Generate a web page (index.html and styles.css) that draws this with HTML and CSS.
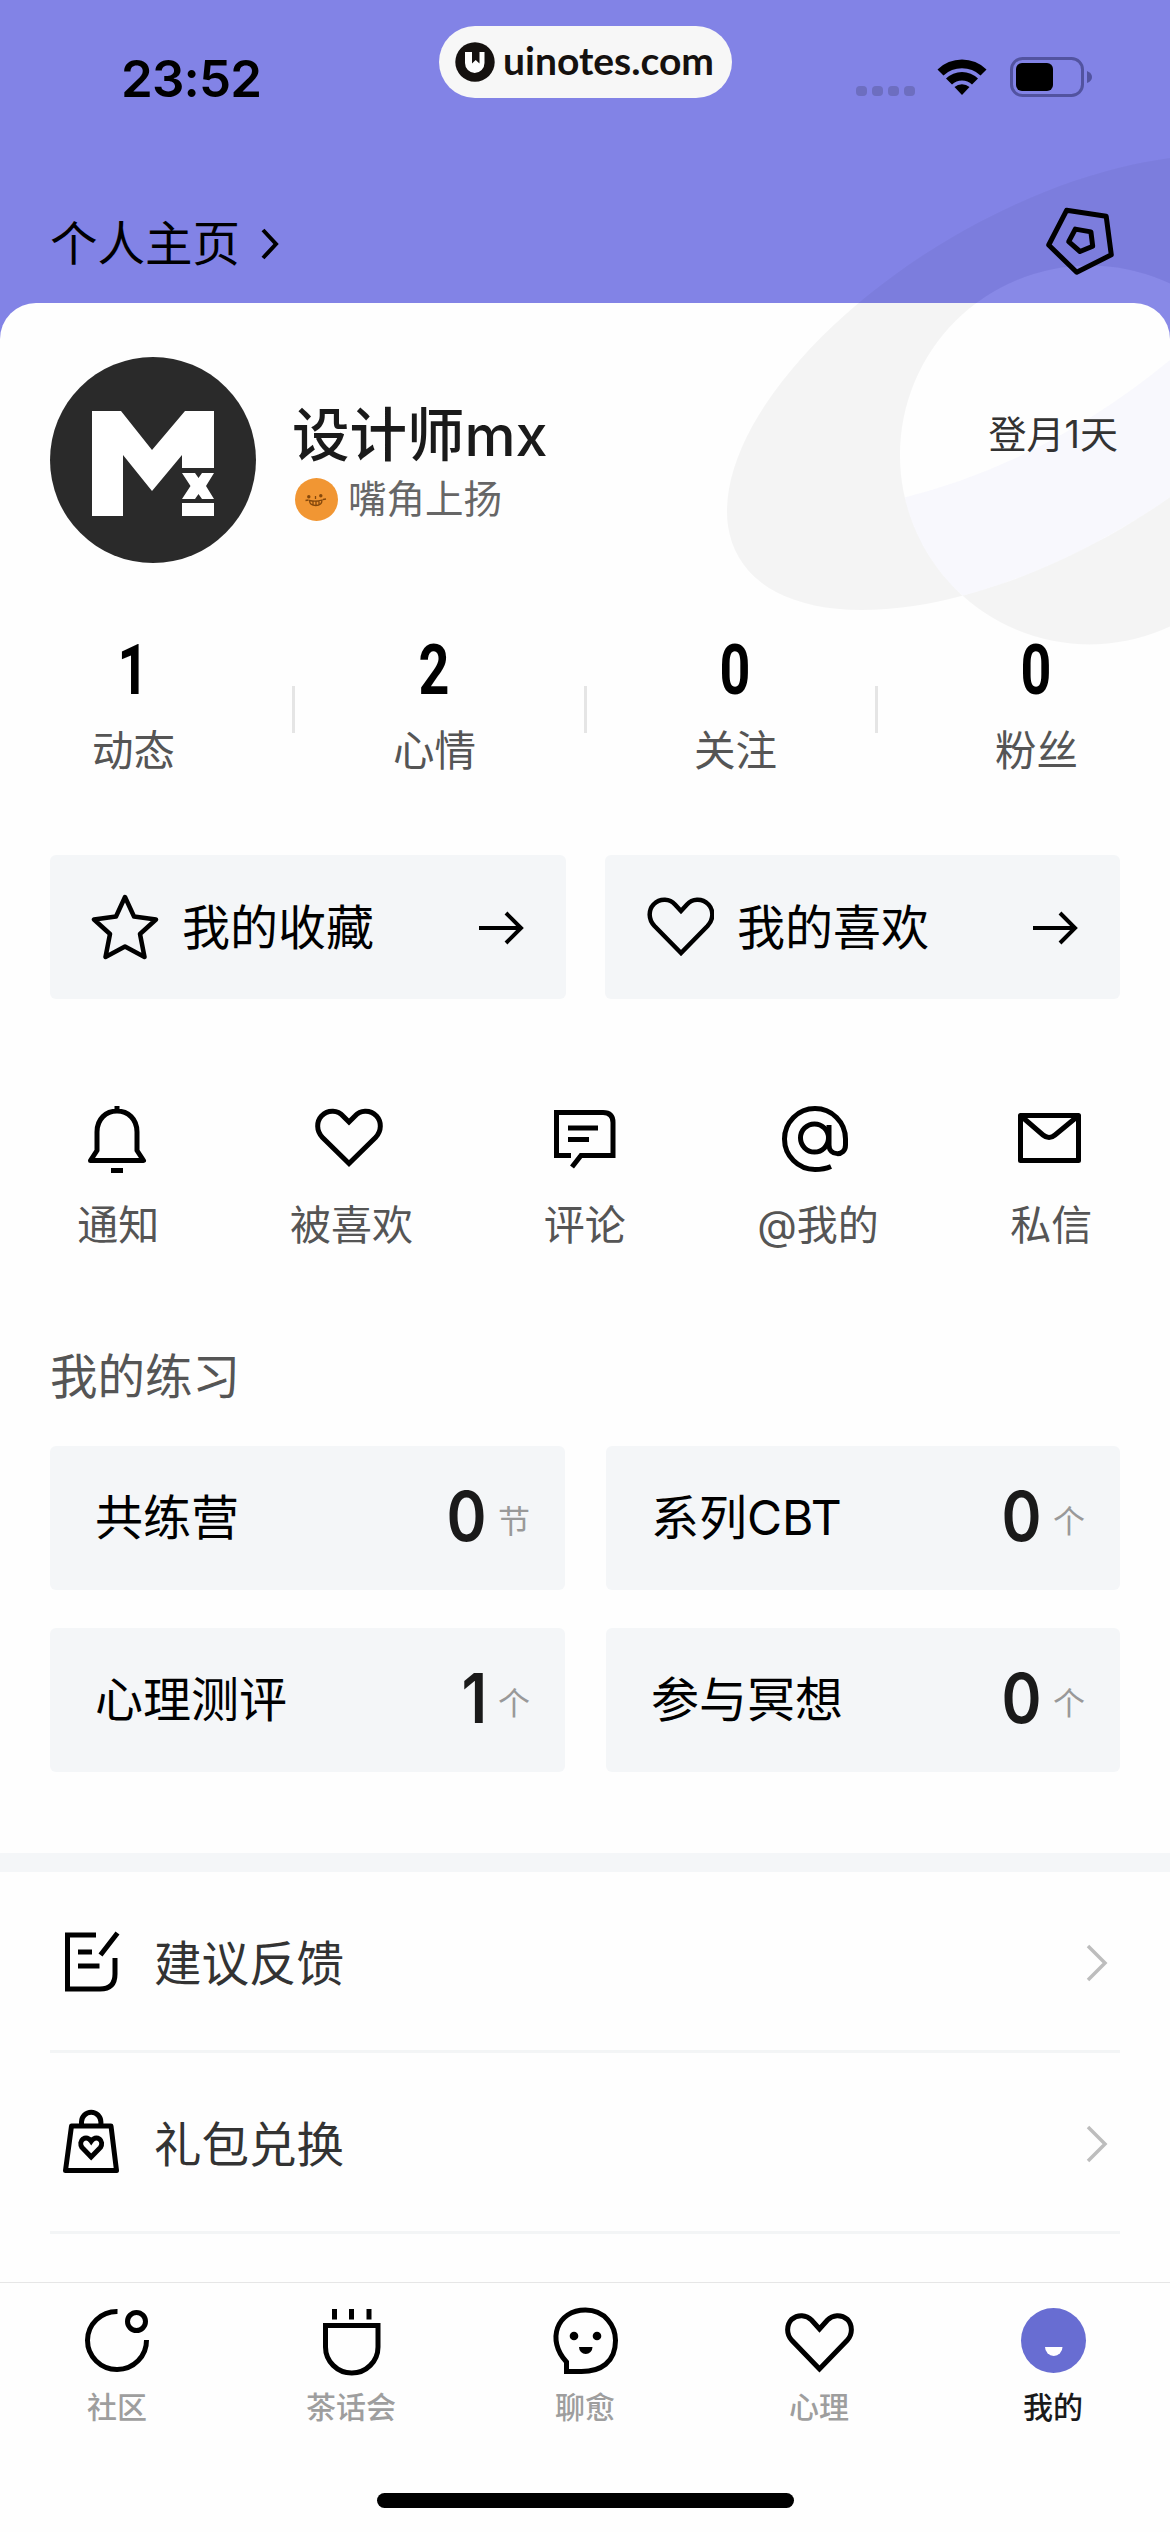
FILE: index.html
```html
<!DOCTYPE html>
<html lang="zh-CN">
<head>
<meta charset="utf-8">
<title>个人主页</title>
<link rel="stylesheet" href="styles.css">
</head>
<body>
<div class="page">
  <header class="header">
    <div class="status">
      <span class="time">23:52</span>
      <div class="pill">
        <svg class="pill-logo" width="40" height="40" viewBox="0 0 40 40"><circle cx="20" cy="20" r="19.700" fill="#15110f"/><path d="M10 10h7v11.500l3.700-3.500 3.800 3.500V10h5v11a9.750 10 0 0 1-19.500 0z" fill="#fff"/></svg>
        <span>uinotes.com</span>
      </div>
      <div class="status-icons">
        <div class="dots"><i></i><i></i><i></i><i></i></div>
        <svg width="50" height="38" viewBox="0 0 50 38"><path d="M0.5 11.5a35 35 0 0 1 49 0l-6 6a27 27 0 0 0-37 0zM9 20.5a23 23 0 0 1 32 0l-6 6a14.500 14.500 0 0 0-20 0zM17.500 29a11.500 11.500 0 0 1 15 0L25 37z" fill="#000"/></svg>
        <svg width="82" height="40" viewBox="0 0 82 40"><rect x="1.500" y="1.500" width="71" height="37" rx="11" fill="none" stroke="#5253a0" stroke-width="3"/><rect x="6" y="6" width="37" height="28" rx="6"/><path d="M77 14q5 2 5 6t-5 6z" fill="#5253a0"/></svg>
      </div>
    </div>
    <div class="topnav">
      <div class="home-link">个人主页<svg width="20" height="32" viewBox="0 0 20 32"><path d="M3 2l13 14L3 30" fill="none" stroke="#000" stroke-width="4"/></svg></div>
      <svg width="72" height="72" viewBox="0 0 72 72" fill="none" stroke="#000" stroke-width="5" stroke-linejoin="round"><path d="M24.600 7.300l39.600 6 5.100 38.500-34.600 17.500L6.700 42z"/><path d="M33.300 26.100l15.600 2.800 1.800 14.300-12.700 5.300-11.300-9.800z"/></svg>
    </div>
  </header>

  <main class="card">
    <section class="profile">
      <svg class="avatar" width="206" height="206" viewBox="0 0 206 206"><circle cx="103" cy="103" r="103" fill="#2a2a2a"/><path d="M42 54h29l31 39 33-39h29v57h-32V98l-30 36-29-36v61H42zM132 146h32v13h-32zM132 116h13l3.500 5 3.500-5h12l-8 13 8 13h-12l-3.500-5-3.500 5h-13l8.500-13z" fill="#fff"/></svg>
      <div class="identity">
        <h1>设计师mx</h1>
        <div class="mood">
          <svg width="43" height="43" viewBox="0 0 43 43"><circle cx="21.500" cy="21.500" r="21.500" fill="#f19633"/><g fill="none" stroke="#84480c" stroke-width="1.300"><path d="M14.500 22.500q6.500 1.500 12.500-.5 0 5.500-6.200 5.500t-6.300-5zM18 23.500v3M21 23.500v4M24 23.500v3M20.500 18v3M10.500 22.500l3-.5M28 21.500l3-.5"/></g><circle cx="13.800" cy="18.800" r="1.700" fill="#84480c"/><circle cx="25.800" cy="17.800" r="1.700" fill="#84480c"/></svg>
          <span>嘴角上扬</span>
        </div>
      </div>
      <span class="days">登月1天</span>
    </section>

    <section class="stats">
      <div><b>1</b><span>动态</span></div>
      <div><b>2</b><span>心情</span></div>
      <div><b>0</b><span>关注</span></div>
      <div><b>0</b><span>粉丝</span></div>
    </section>

    <section class="shortcuts">
      <a class="tile">
        <svg width="68" height="68" viewBox="0 0 68 68" fill="none" stroke="#000" stroke-width="4.500" stroke-linejoin="round"><path d="M34 4l9 19.500 22 3-16 14.500 4.500 23L34 53.500 14.500 64 19 41 3 26.500l22-3z"/></svg>
        <span>我的收藏</span>
        <svg class="arrow" width="46" height="34" viewBox="0 0 46 34" fill="none" stroke="#000" stroke-width="4"><path d="M1 17h42M28 2l15 15-15 15"/></svg>
      </a>
      <a class="tile">
        <svg width="68" height="68" viewBox="0 0 68 68" fill="none" stroke="#000" stroke-width="4.500"><path d="M35 60L8.500 33C2 26 2.500 17 7.500 11.500 14.500 4.500 24 6 29 11.500l6 6.500 6-6.500C46 6 55.500 4.500 62.500 11.500 67.500 17 68 26 61.500 33z"/></svg>
        <span>我的喜欢</span>
        <svg class="arrow" width="46" height="34" viewBox="0 0 46 34" fill="none" stroke="#000" stroke-width="4"><path d="M1 17h42M28 2l15 15-15 15"/></svg>
      </a>
    </section>

    <section class="inbox">
      <a><svg viewBox="1 0 72 72"><path stroke-linejoin="round" d="M36 4v6M16 48.500V30C16 17 25 9 36 9s20 8 20 21v18.500L62.500 58.500h-53z M30 68.500h12"/></svg><span>通知</span></a>
      <a><svg viewBox="2 0 72 72"><path d="M36 61.500L9.500 35.500C3 28.500 3.500 19.500 8.500 14 15.500 7 25 8.500 30 14l6 6 6-6C47 8.500 56.500 7 63.500 14 68.500 19.500 69 28.500 62.500 35.500z"/></svg><span>被喜欢</span></a>
      <a><svg viewBox="0 0 72 72"><path d="M22 53.500H7.500V10.500H54q10 0 10 10v33H32L23 65M19 26h30M19 37.500h21"/></svg><span>评论</span></a>
      <a><svg viewBox="4 1 72 72"><path d="M53 65.500Q46 68.500 37 68.500A30.500 30.500 0 1 1 67.500 38v6c0 12-16.500 11-16.500 0V24"/><ellipse cx="36.500" cy="37" rx="14" ry="14"/></svg><span>@我的</span></a>
      <a><svg viewBox="2 0 72 72"><path stroke-linejoin="round" d="M7.500 13.500h58v45h-58zM8 14l22 19q6 5 12 0l23-19"/></svg><span>私信</span></a>
    </section>

    <h2>我的练习</h2>
    <section class="practice">
      <div class="tile"><span>共练营</span><b>0</b><small>节</small></div>
      <div class="tile"><span>系列CBT</span><b>0</b><small>个</small></div>
      <div class="tile"><span>心理测评</span><b>1</b><small>个</small></div>
      <div class="tile"><span>参与冥想</span><b>0</b><small>个</small></div>
    </section>

    <section class="menu">
      <a>
        <svg class="menu-icon" viewBox="0 0 72 72"><path d="M39 13H10.500v54H43q15 0 15-15V36M60.500 11L43.500 33M21 30h14M21 44h21.500"/></svg>
        <span>建议反馈</span>
        <svg class="chevron" width="24" height="40" viewBox="0 0 24 40"><path d="M3 3l17 17L3 37" fill="none" stroke="#bdbdbd" stroke-width="3.500"/></svg>
      </a>
      <a>
        <svg class="menu-icon" viewBox="0 0 72 72"><path stroke-linejoin="round" d="M14.500 23h39.500l5.500 44.500h-51zM24.500 22v-3a9.700 9.700 0 0 1 19.400 0v3"/><path d="M34.200 54L25 44.500c-2-3-1.500-6.500 1-8.500 3-2 6-1 8.200 2.200 2.200-3.200 5.200-4.200 8.200-2.200 2.500 2 3 5.500 1 8.500z"/></svg>
        <span>礼包兑换</span>
        <svg class="chevron" width="24" height="40" viewBox="0 0 24 40"><path d="M3 3l17 17L3 37" fill="none" stroke="#bdbdbd" stroke-width="3.500"/></svg>
      </a>
    </section>
  </main>

  <nav class="tabs">
    <a><svg viewBox="0 0 72 72"><path d="M36.500 9.500A29.500 29 0 1 0 65.500 38"/><circle cx="55.500" cy="19.500" r="9"/></svg><span>社区</span></a>
    <a><svg viewBox="0 0 72 72"><path d="M19.500 7v10.500M36.500 7v10.500M54 7v10.500M10.500 23.500h52.500V45a26.250 26 0 0 1-52.500 0z"/></svg><span>茶话会</span></a>
    <a><svg viewBox="0 0 72 72"><path d="M17.500 60C-3 38 8 8 36.500 8 56 8 66.500 24 66.500 38.500c0 22-15 31-34 31H17.500z"/><circle class="solid" cx="25" cy="34" r="4.300"/><circle class="solid" cx="48" cy="34" r="4.300"/><path class="solid" d="M30 45h13.500a6.750 7 0 0 1-13.500 0z"/></svg><span>聊愈</span></a>
    <a><svg viewBox="0 0 72 72"><path d="M36.500 67L9 38.500C3 32 3.500 23 8.500 17.500 15 12 23.500 13 28.500 18l8 9 8-9C49.500 13 58 12 64.500 17.500 69.500 23 70 32 64 38.500z"/></svg><span>心理</span></a>
    <a class="active"><svg viewBox="0 0 72 72"><circle class="face" cx="36.500" cy="38.500" r="32.500"/><path class="smile" d="M28 45h17.500a8.750 9 0 0 1-17.500 0z"/></svg><span>我的</span></a>
    <div class="home-bar"></div>
  </nav>

  <svg class="decor" width="1170" height="700" viewBox="0 0 1170 700">
    <defs>
      <clipPath id="orbit"><ellipse cx="1037" cy="382.700" rx="345.600" ry="168.300" transform="rotate(-30.400 1037 382.700)"/></clipPath>
      <clipPath id="planet"><circle cx="1089.500" cy="455" r="189.500"/></clipPath>
    </defs>
    <path fill-rule="evenodd" fill="#000" fill-opacity=".038" d="M738.900 557.600A345.600 168.300 -30.400 1 1 1335.100 207.800A345.600 168.300 -30.400 1 1 738.900 557.600zM900 455a189.500 189.500 0 1 1 379 0a189.500 189.500 0 1 1-379 0z"/>
    <g clip-path="url(#orbit)">
      <circle cx="1089.500" cy="455" r="189.500" fill="#fff" fill-opacity=".05"/>
      <path clip-path="url(#planet)" fill="#8283e6" fill-opacity=".05" d="M890 501Q1040 467 1170 360V650H890z"/>
    </g>
  </svg>
</div>
</body>
</html>
```
FILE: styles.css
```css
* { box-sizing: border-box; margin: 0; padding: 0; }

body {
  width: 1170px;
  font-family: "Inter", "Noto Sans CJK SC", sans-serif;
  color: #000;
  background: #fff;
}

svg { display: block; flex: none; }

.page {
  position: relative;
  display: flex;
  flex-direction: column;
  width: 1170px;
  height: 2532px;
  overflow: hidden;
  background: #fefefe;
}

/* Header */
.header {
  flex: none;
  height: 343px;
  background: #8283e6;
}

.status {
  display: grid;
  grid-template-columns: 439px 293px 1fr;
  height: 124px;
  padding-top: 26px;
}

.time {
  padding-left: 121px;
  font-size: 51px;
  font-weight: 600;
  line-height: 105px;
  letter-spacing: -0.8px;
}

.pill {
  display: flex;
  align-items: center;
  gap: 8px;
  height: 72px;
  padding-left: 16px;
  border-radius: 36px;
  background: #f7f7f7;
  color: #15110f;
  font: 700 39px/62px "Lato", sans-serif;
}

.pill span { margin-top: -5px; }

.status-icons {
  display: flex;
  height: 72px;
  margin-top: 15px;
  padding-left: 124px;
  align-items: center;
}

.dots { display: flex; gap: 5px; margin: 27px 22px 0 0; }
.dots i { width: 11px; height: 10px; border-radius: 4px; background: #6d6ec0; }
.status-icons svg + svg { margin-left: 23px; }

.topnav {
  position: relative;
  z-index: 2;
  display: flex;
  justify-content: space-between;
  padding: 79px 56px 0 50px;
}

.home-link {
  display: flex;
  align-items: center;
  height: 80px;
  gap: 20px;
  padding-bottom: 6px;
  font-size: 47.500px;
}

.home-link svg { margin-top: 7px; }

/* Decorative rings over header and card */
.decor {
  position: absolute;
  top: 0;
  left: 0;
  z-index: 1;
}

/* Card */
.card {
  flex: none;
  height: 1979px;
  margin-top: -40px;
  border-radius: 36px 36px 0 0;
  background: #fefefe;
}

.profile {
  position: relative;
  z-index: 2;
  display: flex;
  height: 260px;
  padding: 54px 52px 0 50px;
}

.identity { margin-left: 36px; }

h1 {
  margin-top: 45px;
  font-size: 57.500px;
  font-weight: 500;
  line-height: 66px;
  color: #1a1a1a;
}

.mood {
  display: flex;
  align-items: center;
  gap: 10px;
  margin: 10px 0 0 3px;
  font-size: 38.500px;
  line-height: 44px;
  color: #666;
}

.mood span { margin-top: -1px; }

.days {
  margin: 55px 0 0 auto;
  font-size: 38px;
  line-height: 44px;
  color: #333;
}

.stats {
  position: relative;
  z-index: 2;
  display: grid;
  grid-template-columns: repeat(4, 301px);
  height: 292px;
  margin-left: -17px;
  padding-top: 68px;
  background:
    linear-gradient(#e5e5e5, #e5e5e5) 309px 123px / 3px 47px no-repeat,
    linear-gradient(#e5e5e5, #e5e5e5) 601px 123px / 3px 47px no-repeat,
    linear-gradient(#e5e5e5, #e5e5e5) 892px 123px / 3px 47px no-repeat;
}

.stats div {
  display: flex;
  flex-direction: column;
  align-items: center;
}

.stats b {
  height: 89px;
  font: 700 70px/78px "Roboto", sans-serif;
  transform: scaleX(0.77);
}

.stats span {
  font-size: 41.500px;
  line-height: 62px;
  color: #555;
}

.shortcuts {
  display: grid;
  grid-template-columns: 516px 515px;
  gap: 39px;
  padding-left: 50px;
}

.tile {
  display: flex;
  align-items: center;
  height: 144px;
  border-radius: 6px;
  background: #f4f6f8;
  font-size: 48px;
}

.shortcuts .tile { padding: 0 42px 0 41px; }
.shortcuts .tile span { margin: -7px 0 0 23px; }
.arrow { margin: 1px 0 0 auto; }

.inbox {
  display: grid;
  grid-template-columns: repeat(5, 233.300px);
  height: 352px;
  margin-left: 1.500px;
  padding-top: 103px;
}

.inbox a, .tabs a {
  display: flex;
  flex-direction: column;
  align-items: center;
}

.inbox svg, .tabs svg, .menu-icon {
  width: 72px;
  height: 72px;
  overflow: visible;
  fill: none;
  stroke: #000;
  stroke-width: 5;
}

.inbox span {
  margin-top: 21px;
  font-size: 41px;
  line-height: 60px;
  color: #555;
}

h2 {
  height: 95px;
  padding-left: 50px;
  font-size: 47.500px;
  font-weight: 400;
  line-height: 51px;
  color: #555;
}

.practice {
  display: grid;
  grid-template-columns: 515px 514px;
  gap: 38px 41px;
  height: 407px;
  padding-left: 50px;
  align-content: start;
}

.practice .tile { padding: 0 35px 8px 45px; }

.practice b {
  margin: 4px 0 0 auto;
  font-size: 69px;
  font-weight: 600;
  color: #1a1a1a;
  transform: scaleX(0.88);
  transform-origin: right;
}

.practice small {
  margin: 9px 0 0 11px;
  font-size: 32px;
  color: #999;
}

.menu {
  border-top: 19px solid #f4f6f8;
}

.menu a {
  display: flex;
  align-items: center;
  height: 181px;
  margin: 0 50px;
  padding: 0 11px 0 7px;
  border-bottom: 3px solid #f3f5f6;
  font-size: 47.500px;
  color: #333;
}

.menu span { margin: -2px 0 0 25px; }
.menu-icon { margin-top: -6px; }
.chevron { margin: 3px 0 0 auto; }

/* Bottom tabs */
.tabs {
  display: grid;
  grid-template-columns: repeat(5, 234px);
  flex: none;
  align-content: start;
  height: 250px;
  padding-top: 19px;
  border-top: 1px solid #e6e6e6;
  background: #fefefe;
}

.tabs span {
  margin-top: 11px;
  font-size: 30px;
  font-weight: 500;
  line-height: 44px;
  color: #9e9e9e;
}

.tabs .solid { fill: #000; stroke: none; }
.tabs .face { fill: #686dd2; stroke: none; }
.tabs .smile { fill: #fff; stroke: none; }
.tabs .active span { color: #1a1a1a; }

.home-bar {
  grid-column: 1 / -1;
  justify-self: center;
  width: 417px;
  height: 15px;
  margin-top: 64px;
  border-radius: 8px;
  background: #000;
}
```
